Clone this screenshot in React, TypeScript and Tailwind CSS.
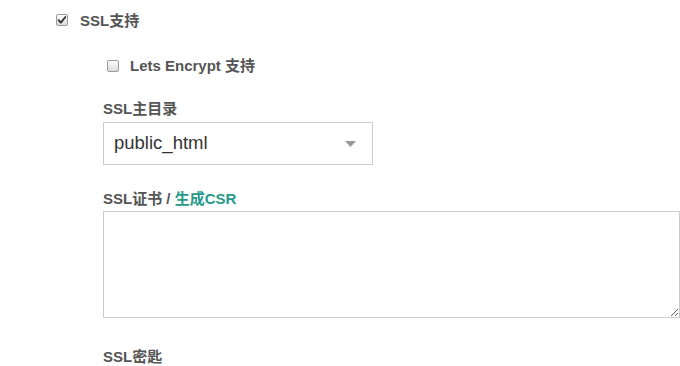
import React from "react";

function Box({ checked }: { checked?: boolean }) {
  return (
    <span className="relative inline-block w-[12px] h-[12px] shrink-0 rounded-[2px] border border-[#9a9a9a] bg-gradient-to-b from-[#fcfcfc] to-[#dcdcdc]">
      {checked && (
        <svg viewBox="0 0 12 12" className="absolute left-[-1px] top-[-1px] w-[12px] h-[12px]">
          <path d="M2.6 6.2 L4.8 8.6 L9.4 3" fill="none" stroke="#333" strokeWidth="1.9" strokeLinecap="round" strokeLinejoin="round" />
        </svg>
      )}
    </span>
  );
}

export default function App() {
  const font = "font-['Liberation_Sans','Noto_Sans_CJK_SC',sans-serif]";
  return (
    <div className={`w-[680px] h-[366px] overflow-hidden bg-white text-[#555] ${font}`}>
      <div className="pl-[56px] pt-[13px] flex items-start gap-[12px]">
        <span className="mt-[1px] flex"><Box checked /></span>
        <span className="text-[15px] font-bold leading-[15px]">SSL支持</span>
      </div>
      <div className="pl-[103px]">
        <div className="mt-[30px] ml-[4px] flex items-start gap-[11px]">
          <span className="mt-[2px] flex"><Box /></span>
          <span className="text-[15px] font-bold leading-[15px]">Lets Encrypt 支持</span>
        </div>
        <div className="mt-[28px] text-[15px] font-bold leading-[15px]">SSL主目录</div>
        <div className="mt-[6px] w-[270px] h-[43px] border border-[#ccc] flex items-center justify-between pl-[10px] pr-[16px]">
          <span className="text-[18.5px] text-[#333] leading-none">public_html</span>
          <svg width="11" height="6" viewBox="0 0 11 6"><path d="M0 0 L11 0 L5.5 6 Z" fill="#999" /></svg>
        </div>
        <div className="mt-[26px] text-[15px] font-bold leading-[15px]">
          SSL证书 / <span className="text-[#26998b]">生成CSR</span>
        </div>
        <textarea className="block mt-[5px] w-[577px] h-[107px] border border-[#ccc] outline-none" />
        <div className="mt-[31px] text-[15px] font-bold leading-[15px]">SSL密匙</div>
      </div>
    </div>
  );
}
